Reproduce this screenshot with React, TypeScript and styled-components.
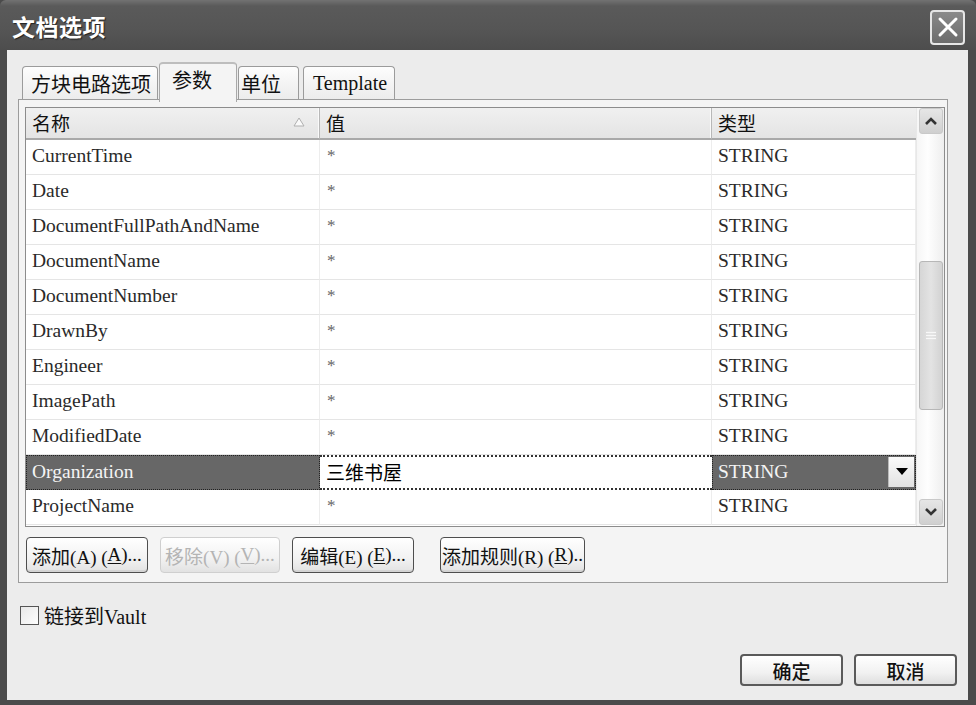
import { Fragment } from 'react';
import styled, { createGlobalStyle, css } from 'styled-components';

const SERIF = `"Liberation Serif", "Noto Sans CJK SC", serif`;
const CJK = `"Noto Sans CJK SC", "Liberation Sans", sans-serif`;

const GlobalStyle = createGlobalStyle`
  html, body {
    margin: 0;
    padding: 0;
    background: #4a4a4a;
  }
  * {
    box-sizing: border-box;
  }
`;

interface Param {
  name: string;
  value: string;
}

const params: Param[] = [
  { name: 'CurrentTime', value: '*' },
  { name: 'Date', value: '*' },
  { name: 'DocumentFullPathAndName', value: '*' },
  { name: 'DocumentName', value: '*' },
  { name: 'DocumentNumber', value: '*' },
  { name: 'DrawnBy', value: '*' },
  { name: 'Engineer', value: '*' },
  { name: 'ImagePath', value: '*' },
  { name: 'ModifiedDate', value: '*' },
  { name: 'Organization', value: '三维书屋' },
  { name: 'ProjectName', value: '*' },
];

const SELECTED = 'Organization';

const Window = styled.div`
  width: 976px;
  height: 705px;
  display: flex;
  flex-direction: column;
  background: #4b4b4b;
  overflow: hidden;
`;

const TitleBar = styled.div`
  height: 50px;
  flex: none;
  display: flex;
  align-items: center;
  justify-content: space-between;
  padding: 0 11px 0 12px;
  background: linear-gradient(#727272 0%, #5a5a5a 12%, #555 60%, #4d4d4d 100%);
  border-radius: 6px 6px 0 0;
`;

const Title = styled.div`
  font-family: ${CJK};
  font-weight: 700;
  font-size: 23px;
  color: #fff;
  letter-spacing: 0.5px;
  text-shadow: 1px 1px 1px #222;
  margin-top: 2px;
`;

const CloseButton = styled.div`
  width: 35px;
  height: 35px;
  border: 2px solid #e6e6e6;
  border-radius: 4px;
  background: linear-gradient(#8a8a8a, #6c6c6c);
  display: flex;
  align-items: center;
  justify-content: center;
  margin-top: 4px;
`;

const Client = styled.div`
  flex: 1;
  display: flex;
  flex-direction: column;
  background: #ececec;
  border-left: 7px solid #4b4b4b;
  border-right: 8px solid #4b4b4b;
  border-bottom: 5px solid #4b4b4b;
  padding: 12px 11px 14px 11px;
`;

const TabStrip = styled.div`
  height: 37px;
  display: flex;
  align-items: flex-end;
  padding-left: 4px;
  gap: 1px;
`;

const Tab = styled.div<{ $width: number; $pad: number; $active?: boolean; $gapLeft?: number }>`
  width: ${p => p.$width}px;
  padding-left: ${p => p.$pad}px;
  margin-left: ${p => p.$gapLeft ?? 0}px;
  height: 33px;
  display: flex;
  align-items: center;
  white-space: nowrap;
  font-family: ${SERIF};
  font-size: 20px;
  color: #111;
  border: 1px solid #9b9b9b;
  border-bottom: none;
  border-radius: 4px 4px 0 0;
  background: linear-gradient(#fdfdfd, #ececec);

  ${p =>
    p.$active &&
    css`
      height: 40px;
      margin-bottom: -3px;
      position: relative;
      z-index: 1;
      background: #f4f4f4;
      border-color: #a8a8a8;
      border-top: 2px solid #bdbdbd;
      padding-bottom: 8px;
    `}
`;

const Panel = styled.div`
  width: 930px;
  height: 484px;
  border: 1px solid #9c9c9c;
  background: #f4f4f4;
  padding: 7px 2px 0 6px;
  display: flex;
  flex-direction: column;
`;

const GridBox = styled.div`
  width: 920px;
  height: 420px;
  border: 1px solid #8c8c8c;
  background: #fff;
  display: flex;
`;

const Table = styled.div`
  flex: 1;
  display: grid;
  grid-template-columns: 294px 392px 204px;
  grid-auto-rows: 35px;
  grid-template-rows: 32px;
  align-content: start;
`;

const HeadCell = styled.div<{ $last?: boolean }>`
  display: flex;
  align-items: center;
  justify-content: space-between;
  padding: 0 14px 2px 6px;
  font-family: ${CJK};
  font-size: 19px;
  color: #111;
  background: linear-gradient(#f0f0f0, #e4e4e4);
  border-bottom: 2px solid #a9a9a9;
  border-right: ${p => (p.$last ? 'none' : '1px solid #b8b8b8')};
  box-shadow: ${p => (p.$last ? 'none' : 'inset -1px 0 0 #fafafa')};
`;

const Cell = styled.div<{ $selected?: boolean; $editing?: boolean }>`
  display: flex;
  align-items: center;
  padding: 0 0 2px 6px;
  font-family: ${SERIF};
  font-size: 19.5px;
  color: #2a2a2a;
  white-space: nowrap;
  overflow: hidden;
  border-bottom: 1px solid #e5e5e5;
  border-right: 1px solid #ededed;

  ${p =>
    p.$selected &&
    css`
      background: #676767;
      color: #f4f4f4;
      border: 1px dotted #222;
      padding-left: 5px;
    `}

  ${p =>
    p.$editing &&
    css`
      border-top: 2px dotted #333;
      border-bottom: 2px dotted #333;
      border-right: none;
      color: #000;
      font-size: 19px;
    `}
`;

const TypeCell = styled(Cell)`
  justify-content: space-between;
  padding-right: 1px;
`;

const Star = styled.span`
  font-size: 17px;
  color: #666;
  margin-left: 1px;
`;

const DropButton = styled.div`
  width: 26px;
  height: 30px;
  background: linear-gradient(#fafafa, #e2e2e2);
  border-left: 1px solid #bbb;
  display: flex;
  align-items: center;
  justify-content: center;
`;

const ScrollBar = styled.div`
  width: 28px;
  display: flex;
  flex-direction: column;
  padding: 0 1px 1px 2px;
  background: linear-gradient(90deg, #f6f6f6, #fefefe 40%, #eeeeee);
  border-left: 1px solid #e8e8e8;
`;

const ScrollArrow = styled.div`
  height: 26px;
  flex: none;
  border: 1px solid #c9c9c9;
  border-radius: 3px;
  background: linear-gradient(#e6e6e6, #cfcfcf);
  display: flex;
  align-items: center;
  justify-content: center;
`;

const Track = styled.div`
  flex: 1;
  display: flex;
  flex-direction: column;
`;

const Thumb = styled.div<{ $top: number; $height: number }>`
  margin-top: ${p => p.$top}px;
  height: ${p => p.$height}px;
  border: 1px solid #b7b7b7;
  border-radius: 3px;
  background: linear-gradient(90deg, #d6d6d6, #e3e3e3 50%, #d2d2d2);
  display: flex;
  align-items: center;
  justify-content: center;
`;

const ButtonRow = styled.div`
  display: flex;
  margin-top: 10px;
  padding-left: 1px;
`;

const Button = styled.div<{ $width: number; $gap?: number; $disabled?: boolean }>`
  width: ${p => p.$width}px;
  height: 36px;
  margin-left: ${p => p.$gap ?? 0}px;
  display: flex;
  align-items: center;
  justify-content: center;
  white-space: nowrap;
  overflow: hidden;
  font-family: ${SERIF};
  font-size: 19px;
  color: ${p => (p.$disabled ? '#b4b4b4' : '#111')};
  border: 1px solid ${p => (p.$disabled ? '#cfcfcf' : '#4e4e4e')};
  border-radius: 4px;
  background: linear-gradient(#ffffff, #f2f2f2 60%, #e2e2e2);
  box-shadow: ${p => (p.$disabled ? 'none' : 'inset 0 -2px 0 #d4d4d4')};
`;

const Mnemonic = styled.span`
  text-decoration: underline;
  text-underline-offset: 2px;
`;

const CheckRow = styled.div`
  display: flex;
  align-items: center;
  gap: 5px;
  margin-top: 18px;
  margin-left: 2px;
  font-family: ${SERIF};
  font-size: 20px;
  color: #111;
`;

const CheckBox = styled.div`
  width: 19px;
  height: 19px;
  border: 1px solid #555;
  background: linear-gradient(135deg, #e8e8e8, #fdfdfd);
`;

const Footer = styled.div`
  margin-top: auto;
  display: flex;
  justify-content: flex-end;
  gap: 11px;
`;

const DialogButton = styled.div`
  width: 103px;
  height: 32px;
  display: flex;
  align-items: center;
  justify-content: center;
  font-family: ${CJK};
  font-size: 19px;
  font-weight: 500;
  color: #111;
  border: 2px solid #5a5a5a;
  border-radius: 4px;
  background: linear-gradient(#ffffff, #f1f1f1 60%, #dedede);
`;

const ChevronUp = () => (
  <svg width="14" height="10" viewBox="0 0 14 10">
    <path d="M2 8 L7 3 L12 8" fill="none" stroke="#333" strokeWidth="2.6" />
  </svg>
);

const ChevronDown = () => (
  <svg width="14" height="10" viewBox="0 0 14 10">
    <path d="M2 2 L7 7 L12 2" fill="none" stroke="#333" strokeWidth="2.6" />
  </svg>
);

const SortArrow = () => (
  <svg width="12" height="10" viewBox="0 0 12 10">
    <path d="M6 1 L11 9 L1 9 Z" fill="#fafafa" stroke="#b0b0b0" strokeWidth="1" />
  </svg>
);

const Grip = () => (
  <svg width="10" height="10" viewBox="0 0 10 10">
    {[1, 4, 7].map(y => (
      <line key={y} x1="0" x2="10" y1={y + 0.5} y2={y + 0.5} stroke="#f8f8f8" strokeWidth="1.2" />
    ))}
  </svg>
);

const CloseIcon = () => (
  <svg width="22" height="22" viewBox="0 0 22 22">
    <path d="M3 3 L19 19 M19 3 L3 19" stroke="#fff" strokeWidth="3" strokeLinecap="round" />
  </svg>
);

const DropArrow = () => (
  <svg width="12" height="7" viewBox="0 0 12 7">
    <path d="M0 0 L12 0 L6 7 Z" fill="#000" />
  </svg>
);

const App = () => {
  return (
    <>
      <GlobalStyle />
      <Window>
        <TitleBar>
          <Title>文档选项</Title>
          <CloseButton>
            <CloseIcon />
          </CloseButton>
        </TitleBar>
        <Client>
          <TabStrip>
            <Tab $width={136} $pad={8}>方块电路选项</Tab>
            <Tab $width={78} $pad={12} $active>参数</Tab>
            <Tab $width={61} $pad={2}>单位</Tab>
            <Tab $width={92} $pad={9} $gapLeft={3}>Template</Tab>
          </TabStrip>
          <Panel>
            <GridBox>
              <Table>
                <HeadCell>
                  名称
                  <SortArrow />
                </HeadCell>
                <HeadCell>值</HeadCell>
                <HeadCell $last>类型</HeadCell>
                {params.map(p => {
                  const sel = p.name === SELECTED;
                  return (
                    <Fragment key={p.name}>
                      <Cell $selected={sel}>{p.name}</Cell>
                      <Cell $editing={sel}>{sel ? p.value : <Star>*</Star>}</Cell>
                      <TypeCell $selected={sel}>
                        STRING
                        {sel && (
                          <DropButton>
                            <DropArrow />
                          </DropButton>
                        )}
                      </TypeCell>
                    </Fragment>
                  );
                })}
              </Table>
              <ScrollBar>
                <ScrollArrow>
                  <ChevronUp />
                </ScrollArrow>
                <Track>
                  <Thumb $top={127} $height={149}>
                    <Grip />
                  </Thumb>
                </Track>
                <ScrollArrow>
                  <ChevronDown />
                </ScrollArrow>
              </ScrollBar>
            </GridBox>
            <ButtonRow>
              <Button $width={122}>
                添加(A) (<Mnemonic>A</Mnemonic>)...
              </Button>
              <Button $width={120} $gap={12} $disabled>
                移除(V) (<Mnemonic>V</Mnemonic>)...
              </Button>
              <Button $width={122} $gap={12}>
                编辑(E) (<Mnemonic>E</Mnemonic>)...
              </Button>
              <Button $width={145} $gap={26}>
                添加规则(R) (<Mnemonic>R</Mnemonic>)..
              </Button>
            </ButtonRow>
          </Panel>
          <CheckRow>
            <CheckBox />
            链接到Vault
          </CheckRow>
          <Footer>
            <DialogButton>确定</DialogButton>
            <DialogButton>取消</DialogButton>
          </Footer>
        </Client>
      </Window>
    </>
  );
};

export default App;
